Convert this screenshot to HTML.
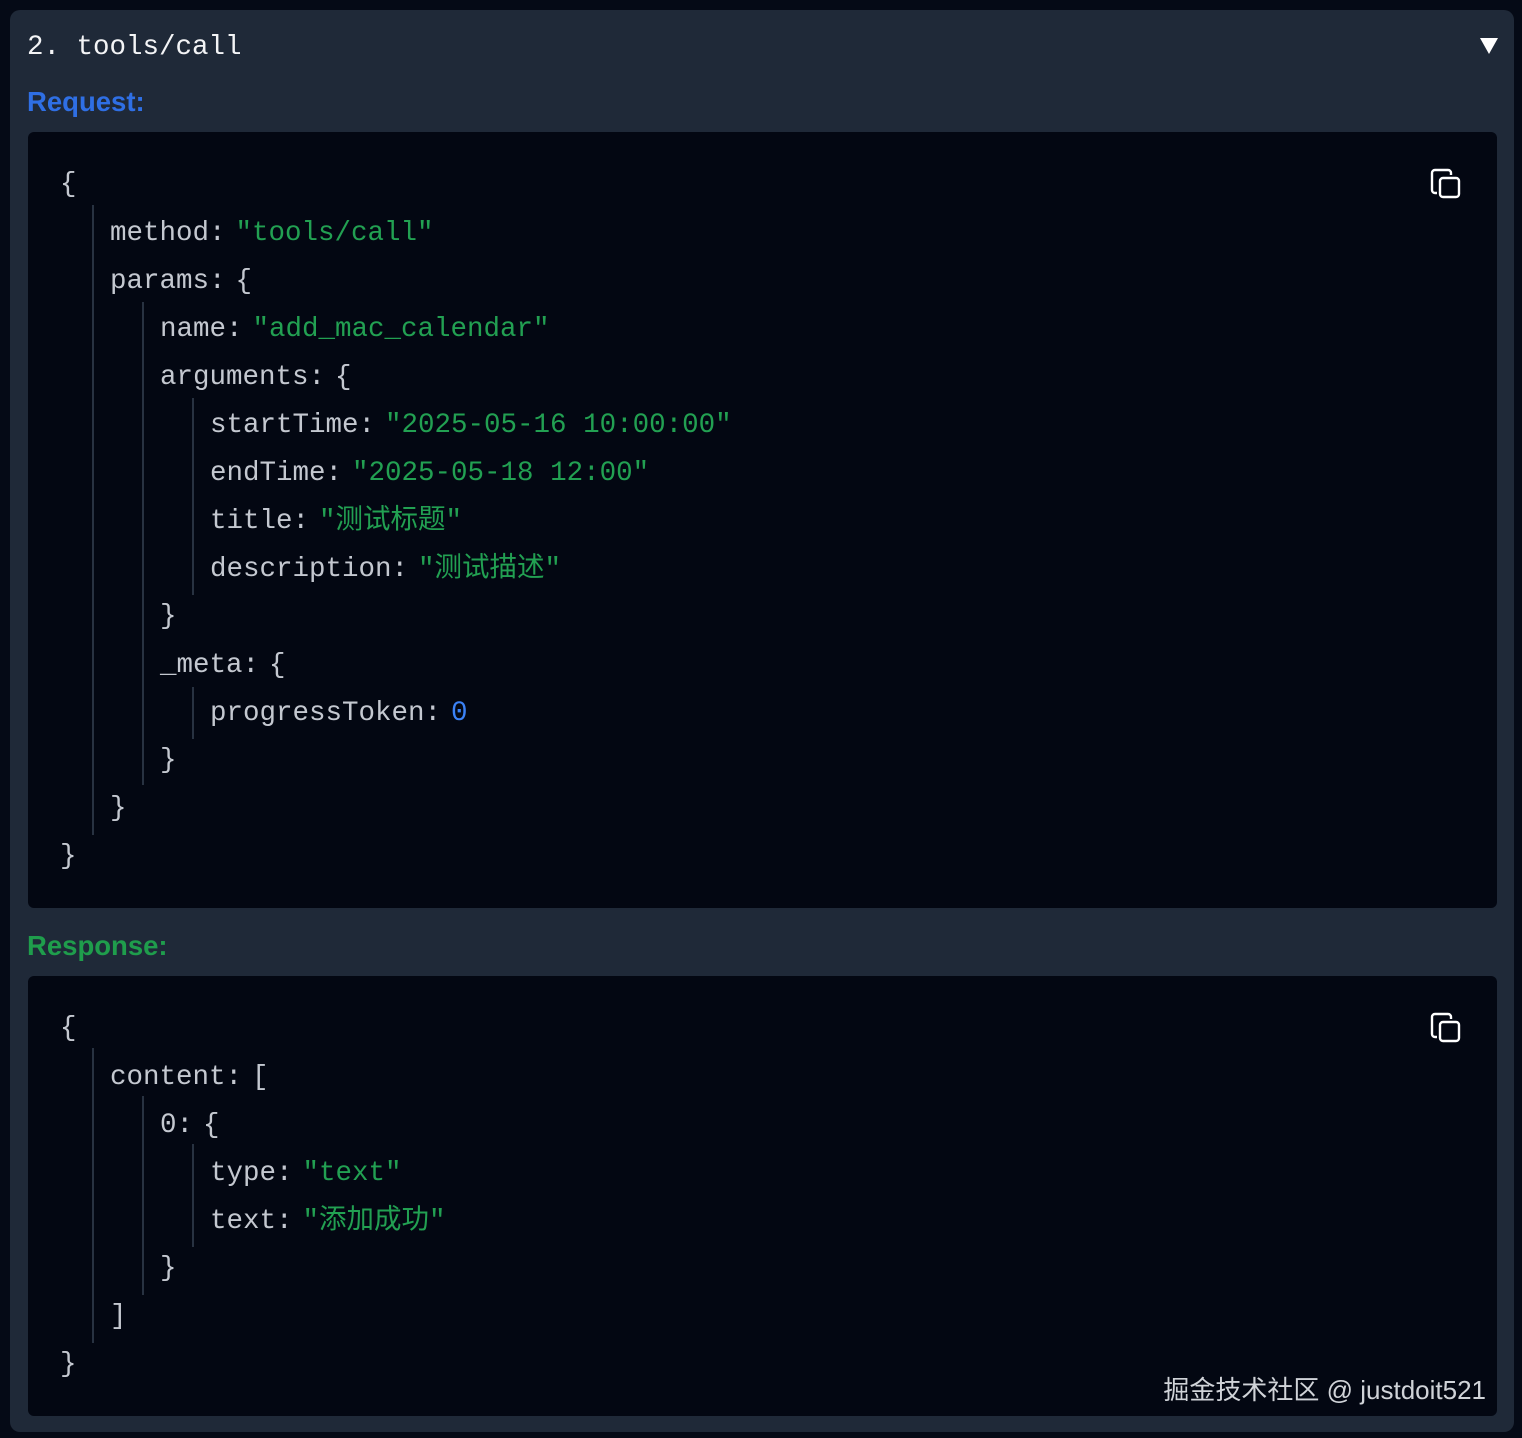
<!DOCTYPE html>
<html><head><meta charset="utf-8"><style>
*{margin:0;padding:0;box-sizing:border-box}
body{width:1522px;height:1438px;background:#050a16;position:relative;overflow:hidden;font-family:"Liberation Mono","Noto Sans CJK SC",monospace}
.panel{position:absolute;left:10px;top:10px;width:1504px;height:1422px;background:#1f2938;border-radius:10px}
.code{position:absolute;left:28px;width:1469px;background:#030712;border-radius:6px}
.l{position:absolute;height:48px;line-height:48px;font-size:27.5px;color:#c4c8d0;white-space:pre;transform:translateY(3px)}
.s{color:#22a052;margin-left:10px}
.n{color:#3b82f6;margin-left:10px}
.p{margin-left:10px}
.g{position:absolute;width:2px;background:#283241}
.lab{position:absolute;left:27px;font-family:"Liberation Sans",sans-serif;font-weight:bold;font-size:27.5px}
.cp{position:absolute;left:1428px}
</style></head><body>
<div class="panel"></div>
<div class="l" style="left:27px;top:21px;color:#f3f4f6">2. tools/call</div>
<div style="position:absolute;left:1480px;top:38px;width:0;height:0;border-left:9px solid transparent;border-right:9px solid transparent;border-top:16px solid #fff"></div>
<div class="lab" style="top:86px;color:#2f6fe4">Request:</div>
<div class="code" style="top:132px;height:776px"></div>
<div class="lab" style="top:930px;color:#1f9d4c">Response:</div>
<div class="code" style="top:976px;height:440px"></div>

<svg class="cp" style="top:167px" width="34" height="34" viewBox="0 0 34 34" fill="none" stroke="#fff" stroke-width="2.4" stroke-linejoin="round"><path d="M9 26H7a3 3 0 0 1-3-3V6a3 3 0 0 1 3-3h13a3 3 0 0 1 3 3v2"/><rect x="12" y="11" width="19" height="19" rx="3"/></svg>
<svg class="cp" style="top:1011px" width="34" height="34" viewBox="0 0 34 34" fill="none" stroke="#fff" stroke-width="2.4" stroke-linejoin="round"><path d="M9 26H7a3 3 0 0 1-3-3V6a3 3 0 0 1 3-3h13a3 3 0 0 1 3 3v2"/><rect x="12" y="11" width="19" height="19" rx="3"/></svg>

<div class="g" style="left:92px;top:205px;height:630px"></div>
<div class="g" style="left:142px;top:302px;height:483px"></div>
<div class="g" style="left:192px;top:398px;height:197px"></div>
<div class="g" style="left:192px;top:687px;height:52px"></div>

<div class="l" style="left:60px;top:158px">{</div>
<div class="l" style="left:110px;top:207px">method:<span class="s">"tools/call"</span></div>
<div class="l" style="left:110px;top:255px">params:<span class="p">{</span></div>
<div class="l" style="left:160px;top:303px">name:<span class="s">"add_mac_calendar"</span></div>
<div class="l" style="left:160px;top:351px">arguments:<span class="p">{</span></div>
<div class="l" style="left:210px;top:399px">startTime:<span class="s">"2025-05-16 10:00:00"</span></div>
<div class="l" style="left:210px;top:447px">endTime:<span class="s">"2025-05-18 12:00"</span></div>
<div class="l" style="left:210px;top:495px">title:<span class="s">"测试标题"</span></div>
<div class="l" style="left:210px;top:543px">description:<span class="s">"测试描述"</span></div>
<div class="l" style="left:160px;top:590px">}</div>
<div class="l" style="left:160px;top:639px">_meta:<span class="p">{</span></div>
<div class="l" style="left:210px;top:687px">progressToken:<span class="n">0</span></div>
<div class="l" style="left:160px;top:734px">}</div>
<div class="l" style="left:110px;top:782px">}</div>
<div class="l" style="left:60px;top:830px">}</div>

<div class="g" style="left:92px;top:1048px;height:295px"></div>
<div class="g" style="left:142px;top:1096px;height:199px"></div>
<div class="g" style="left:192px;top:1144px;height:103px"></div>

<div class="l" style="left:60px;top:1002px">{</div>
<div class="l" style="left:110px;top:1051px">content:<span class="p">[</span></div>
<div class="l" style="left:160px;top:1099px">0:<span class="p">{</span></div>
<div class="l" style="left:210px;top:1147px">type:<span class="s">"text"</span></div>
<div class="l" style="left:210px;top:1195px">text:<span class="s">"添加成功"</span></div>
<div class="l" style="left:160px;top:1242px">}</div>
<div class="l" style="left:110px;top:1290px">]</div>
<div class="l" style="left:60px;top:1338px">}</div>

<div style="position:absolute;right:36px;top:1370px;font-family:'Liberation Sans','Noto Sans CJK SC',sans-serif;font-size:26px;color:#d0d3d8">掘金技术社区 @ justdoit521</div>
</body></html>
